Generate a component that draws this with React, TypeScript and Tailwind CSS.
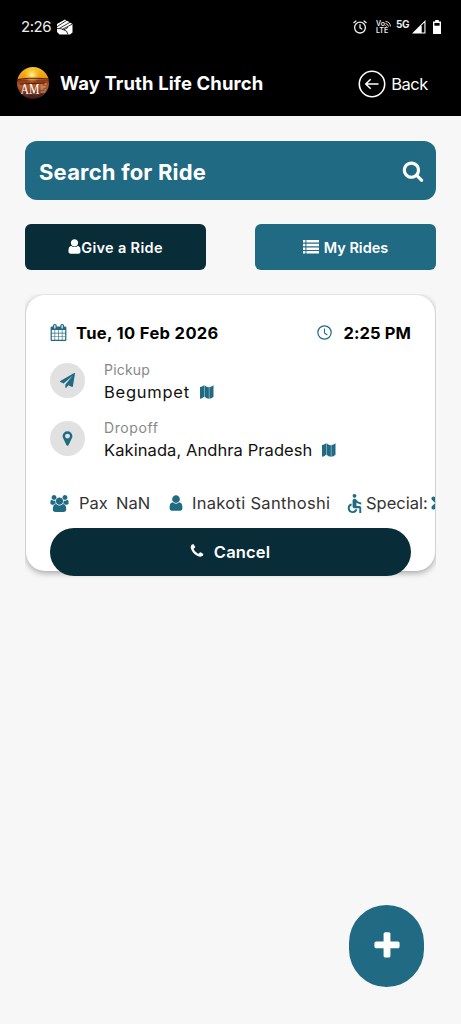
import { MdAccessible } from "react-icons/md";
import type { ReactNode } from "react";

const icons = {
    search: "M1216 832q0-185-131.5-316.5t-316.5-131.5-316.5 131.5-131.5 316.5 131.5 316.5 316.5 131.5 316.5-131.5 131.5-316.5zm512 832q0 52-38 90t-90 38q-54 0-90-38l-343-342q-179 124-399 124-143 0-273.5-55.5t-225-150-150-225-55.5-273.5 55.5-273.5 150-225 225-150 273.5-55.5 273.5 55.5 225 150 150 225 55.5 273.5q0 220-124 399l343 343q37 37 37 90z",
    user: "M1536 1399q0 109-62.5 187t-150.5 78h-854q-88 0-150.5-78t-62.5-187q0-85 8.5-160.5t31.5-152 58.5-131 94-89 134.5-34.5q131 128 313 128t313-128q76 0 134.5 34.5t94 89 58.5 131 31.5 152 8.5 160.5zm-256-887q0 159-112.5 271.5t-271.5 112.5-271.5-112.5-112.5-271.5 112.5-271.5 271.5-112.5 271.5 112.5 112.5 271.5z",
    plus: "M1600 736v192q0 40-28 68t-68 28h-416v416q0 40-28 68t-68 28h-192q-40 0-68-28t-28-68v-416h-416q-40 0-68-28t-28-68v-192q0-40 28-68t68-28h416v-416q0-40 28-68t68-28h192q40 0 68 28t28 68v416h416q40 0 68 28t28 68z",
    calendar:
        "M192 1664h288v-288h-288v288zm352 0h320v-288h-320v288zm-352-352h288v-320h-288v320zm352 0h320v-320h-320v320zm-352-384h288v-288h-288v288zm736 736h320v-288h-320v288zm-384-736h320v-288h-320v288zm768 736h288v-288h-288v288zm-384-352h320v-320h-320v320zm-352-864v-288q0-13-9.5-22.5t-22.5-9.5h-64q-13 0-22.5 9.5t-9.5 22.5v288q0 13 9.5 22.5t22.5 9.5h64q13 0 22.5-9.5t9.5-22.5zm736 864h288v-320h-288v320zm-384-384h320v-288h-320v288zm384 0h288v-288h-288v288zm32-480v-288q0-13-9.5-22.5t-22.5-9.5h-64q-13 0-22.5 9.5t-9.5 22.5v288q0 13 9.5 22.5t22.5 9.5h64q13 0 22.5-9.5t9.5-22.5zm384-64v1280q0 52-38 90t-90 38h-1408q-52 0-90-38t-38-90v-1280q0-52 38-90t90-38h128v-96q0-66 47-113t113-47h64q66 0 113 47t47 113v96h384v-96q0-66 47-113t113-47h64q66 0 113 47t47 113v96h128q52 0 90 38t38 90z",
    group: "M529 896q-162 5-265 128h-134q-82 0-138-40.5t-56-118.5q0-353 124-353 6 0 43.5 21t97.5 42.5 119 21.5q67 0 133-23-5 37-5 66 0 139 81 256zm1071 637q0 120-73 189.5t-194 69.5h-874q-121 0-194-69.5t-73-189.5q0-53 3.5-103.5t14-109 26.5-108.5 43-97.5 62-81 85.5-53.5 111.5-20q10 0 43 21.5t73 48 107 48 135 21.5 135-21.5 107-48 73-48 43-21.5q61 0 111.5 20t85.5 53.5 62 81 43 97.5 26.5 108.5 14 109 3.5 103.5zm-1024-1277q0 106-75 181t-181 75-181-75-75-181 75-181 181-75 181 75 75 181zm704 384q0 159-112.5 271.5t-271.5 112.5-271.5-112.5-112.5-271.5 112.5-271.5 271.5-112.5 271.5 112.5 112.5 271.5zm576 225q0 78-56 118.5t-138 40.5h-134q-103-123-265-128 81-117 81-256 0-29-5-66 66 23 133 23 59 0 119-21.5t97.5-42.5 43.5-21q124 0 124 353zm-128-609q0 106-75 181t-181 75-181-75-75-181 75-181 181-75 181 75 75 181z",
    plane: "M1764 11q33 24 27 64l-256 1536q-5 29-32 45-14 8-31 8-11 0-24-5l-453-185-242 295q-18 23-49 23-13 0-22-4-19-7-30.5-23.5t-11.5-36.5v-349l864-1059-1069 925-395-162q-37-14-40-55-2-40 32-59l1664-960q15-9 32-9 20 0 36 11z",
    marker: "M1152 640q0-106-75-181t-181-75-181 75-75 181 75 181 181 75 181-75 75-181zm256 0q0 109-33 179l-364 774q-16 33-47.5 52t-67.5 19-67.5-19-46.5-52l-365-774q-33-70-33-179 0-212 150-362t362-150 362 150 150 362z",
    phone: "M1600 1240q0 27-10 70.5t-21 68.5q-21 50-122 106-94 51-186 51-27 0-52.5-3.5t-57.5-12.5-47.5-14.5-55.5-20.5-49-18q-98-35-175-83-128-79-264.5-215.5t-215.5-264.5q-48-77-83-175-3-9-18-49t-20.5-55.5-14.5-47.5-12.5-57.5-3.5-52.5q0-92 51-186 56-101 106-122 25-11 68.5-21t70.5-10q14 0 21 3 18 6 53 76 11 19 30 54t35 63.5 31 53.5q3 4 17.5 25t21.5 35.5 7 28.5q0 20-28.5 50t-62 55-62 53-28.5 46q0 9 5 22.5t8.5 20.5 14 24 11.5 19q76 137 174 235t235 174q2 1 19 11.5t24 14 20.5 8.5 22.5 5q18 0 46-28.5t53-62 55-62 50-28.5q14 0 28.5 7t35.5 21.5 25 17.5q25 15 53.5 31t63.5 35 54 30q70 35 76 53 3 7 3 21z",
};

function Icon({ name, className }: { name: keyof typeof icons; className: string }) {
    return (
        <svg viewBox="0 0 1792 1792" fill="currentColor" overflow="visible" className={`shrink-0 ${className}`}>
            <path d={icons[name]} />
        </svg>
    );
}

function MapIcon() {
    return (
        <svg viewBox="0 0 14 14" className="h-[14px] w-[14px] shrink-0 -translate-y-px text-[#206a83]" fill="currentColor">
            <path d="M0 2Q2 2 4.2.3v11.4Q2 13.6 0 13.7zM4.6.3Q6.500 2.300 8.900 2.300v11.400Q6.500 13.500 4.600 11.700zM9.300 2.300Q11.500 2 13.500.3v11.400Q11.500 13.500 9.300 13.700z" />
        </svg>
    );
}

function StatusBar() {
    return (
        <div className="flex h-[52px] items-center justify-between pl-[21px] pr-[20px] pt-[2px] text-[#eee]">
            <div className="flex items-center gap-[6px]">
                <span className="w-[30px] whitespace-nowrap text-[15px] tracking-[-0.45px]">2:26</span>
                <svg viewBox="0 0 16 16" className="-mt-px h-4 w-4">
                    <path d="M0 5 8 .5 15.5 5v8.5L13 15.5H2.5L0 13z" fill="#fff" />
                    <path d="M0 7.7 10.8.7M2.5 9.3 13.5 3M5 10.5 15.5 5M0 9.5q5-.3 7 1.5 3 0 4 4.5M7 10.8l4-2.4" fill="none" stroke="#000" strokeWidth="0.8" />
                </svg>
            </div>
            <div className="flex items-center">
                <svg viewBox="0 0 14 14" className="mr-[9px] h-[14px] w-[14px] -translate-x-[1px]" fill="none" stroke="currentColor" strokeWidth="1.3">
                    <circle cx="7" cy="7.6" r="5.4" />
                    <path d="M7 4.3v3.6l2.3 1.3M.5 3 3.3.7M13.5 3 10.7.7" />
                </svg>
                <div className="w-[15px] -translate-x-[1px] text-[7px] font-semibold leading-[7px]">
                    <div className="flex items-center">
                        Vo
                        <svg viewBox="0 0 6 6" className="h-[6px] w-[6px]" fill="none" stroke="currentColor" strokeWidth="0.9">
                            <path d="M.5.5q4.5 0 5 5M.5 2.5q2.5.2 3 3M.5 4.5l1 1" />
                        </svg>
                    </div>
                    <div>LTE</div>
                </div>
                <span className="ml-[4px] mt-[-7px] w-[13px] text-[10px] font-bold leading-[10px] tracking-[-0.5px]">5G</span>
                <svg viewBox="0 0 14 14" className="ml-[3px] h-[14px] w-[14px]">
                    <path d="M0 13.5 13.5 0v13.5z" fill="#fff" />
                    <path d="M9.7 5.3 12.4 2.500v9.900H9.700z" fill="#000" />
                </svg>
                <svg viewBox="0 0 8 14" className="ml-[7px] h-[14px] w-[8px]">
                    <path d="M2.2 0h3.6v1.5H8V14H0V1.5h2.2z" fill="#fff" />
                    <path d="M1.4 3h5.2v2.7H1.4z" fill="#000" />
                </svg>
            </div>
        </div>
    );
}

function Logo() {
    return (
        <svg viewBox="0 0 32 32" className="-mt-[2px] h-8 w-8">
            <defs>
                <linearGradient id="sky" x1="0" y1="0" x2="0" y2="1">
                    <stop offset="0" stopColor="#f5c51e" />
                    <stop offset="0.34" stopColor="#ef9613" />
                    <stop offset="0.42" stopColor="#8c3613" />
                    <stop offset="0.6" stopColor="#b85a28" />
                    <stop offset="1" stopColor="#35181a" />
                </linearGradient>
                <radialGradient id="sun">
                    <stop offset="0" stopColor="#fff9a8" />
                    <stop offset="1" stopColor="#ffd52c" stopOpacity="0" />
                </radialGradient>
                <clipPath id="round">
                    <circle cx="16" cy="16" r="16" />
                </clipPath>
            </defs>
            <g clipPath="url(#round)">
                <path d="M0 0h32v32H0z" fill="url(#sky)" />
                <circle cx="15" cy="8" r="8" fill="url(#sun)" />
                <path d="M0 13q9-3 32-1M3 17l25-1M5 28l4-2m3 3 5-1m3 1 6-2" stroke="#4c2019" fill="none" />
                <text x="3.5" y="27" textLength="19" lengthAdjust="spacingAndGlyphs" className="fill-white font-['Liberation_Serif'] text-[14px]">AM</text>
                <path d="M23.500 18h2m2-1h2m-6 3h5m-5 2h3m1 1h2m-6 2h5" stroke="#d7c4bb" strokeWidth="0.8" />
            </g>
        </svg>
    );
}

function Header() {
    return (
        <header className="h-[116px] bg-black text-white">
            <StatusBar />
            <div className="flex h-16 items-center pl-[17px] pr-[33px]">
                <Logo />
                <h1 className="ml-[11px] whitespace-nowrap text-[18.5px] font-bold tracking-[0.1px]">Way Truth Life Church</h1>
                <button className="ml-auto flex items-center gap-[5px]">
                    <svg viewBox="0 0 28 28" className="h-7 w-7" fill="none" stroke="currentColor" strokeWidth="1.6">
                        <circle cx="14" cy="14" r="12.7" />
                        <path d="M20.5 14H8M12.7 9.2 7.8 14l4.900 4.800" />
                    </svg>
                    <span className="w-[37px] whitespace-nowrap text-[16.5px] tracking-[-0.5px]">Back</span>
                </button>
            </div>
        </header>
    );
}

function Stop({ icon, label, place }: { icon: ReactNode; label: ReactNode; place: ReactNode }) {
    return (
        <div className="flex h-[58px] items-start">
            <div className="mt-[2px] flex h-[35px] w-[35px] items-center justify-center rounded-full bg-[#e1e1e1] text-[#206a83]">
                {icon}
            </div>
            <div className="ml-[19px] whitespace-nowrap">
                <div className="translate-y-px text-[14px] leading-4 text-[#888]">{label}</div>
                <div className="mt-[3px] flex items-center gap-[10px] text-[16.5px] leading-[25px] text-[#111]">
                    {place}
                    <MapIcon />
                </div>
            </div>
        </div>
    );
}

function RideCard() {
    return (
        <div className="mt-6 h-[300px] w-[411px] overflow-hidden px-px pt-px">
            <div className="h-[276px] rounded-[19px] bg-white pl-[24px] pt-[24px] shadow-[0_2px_6px_rgba(0,0,0,0.35)]">
                <div className="flex h-[28px] items-center pr-[24px] text-[16.5px] font-bold text-black">
                    <Icon name="calendar" className="h-[17px] w-[17px] -translate-y-px text-[#206a83]" />
                    <span className="ml-[9px] whitespace-nowrap tracking-[0.36px]">Tue, 10 Feb 2026</span>
                    <svg viewBox="0 0 16 16" className="ml-auto mr-[11px] h-[15px] w-[15px] -translate-y-px text-[#206a83]" fill="none" stroke="currentColor">
                        <circle cx="8" cy="8" r="7.1" strokeWidth="1.3" />
                        <path d="M8 3.8v4.700l3 2.200" strokeWidth="1.1" />
                    </svg>
                    <span className="whitespace-nowrap tracking-[0.1px]">2:25 PM</span>
                </div>
                <div className="mt-[14px]">
                    <Stop
                        icon={<Icon name="plane" className="h-[15px] w-[15px]" />}
                        label={<span className="tracking-[0.2px]">Pickup</span>}
                        place={<span className="tracking-[0.75px]">Begumpet</span>}
                    />
                    <Stop
                        icon={<Icon name="marker" className="h-[17px] w-[17px]" />}
                        label={<span className="tracking-[0.6px]">Dropoff</span>}
                        place={<span className="tracking-[0.08px]">Kakinada, Andhra Pradesh</span>}
                    />
                </div>
                <div className="mt-[13px] flex h-[26px] items-center overflow-hidden whitespace-nowrap text-[16.5px] text-[#333]">
                    <Icon name="group" className="ml-[1px] h-[17px] w-[17px] text-[#206a83]" />
                    <span className="ml-[11px] w-[37px] shrink-0">Pax</span>
                    <span className="w-[34px] shrink-0">NaN</span>
                    <Icon name="user" className="ml-[17px] h-[18px] w-[18px] text-[#206a83]" />
                    <span className="ml-[7px] w-[138px] shrink-0 tracking-[0.3px]">Inakoti Santhoshi</span>
                    <MdAccessible className="ml-[13px] h-[23px] w-[23px] shrink-0 text-[#206a83]" />
                    <span className="w-[61px] shrink-0">Special:</span>
                    <svg viewBox="0 0 14 14" className="ml-[4px] h-[14px] w-[14px] shrink-0 text-[#206a83]" stroke="currentColor" strokeWidth="4" strokeLinecap="round">
                        <path d="m2.5 2.5 9 9m0-9-9 9" />
                    </svg>
                </div>
                <button className="mt-[12px] flex h-[48px] w-[361px] items-center justify-center rounded-full bg-[#082c38] text-[16.5px] font-semibold text-white">
                    <Icon name="phone" className="mr-[8px] h-[16px] w-[16px] -translate-x-[2px] -translate-y-px" />
                    <span className="-ml-px tracking-[0.15px]">Cancel</span>
                </button>
            </div>
        </div>
    );
}

export default function App() {
    return (
        <div className="flex h-screen w-[461px] flex-col overflow-hidden bg-[#f7f7f7] font-['Inter',sans-serif]">
            <Header />
            <main className="px-[25px] pt-[25px]">
                <div className="flex h-[59px] w-[411px] items-center justify-between rounded-xl bg-[#206a83] pl-[14px] pr-[12px] text-white">
                    <span className="whitespace-nowrap pt-[3px] text-[22px] font-bold tracking-[0.2px]">Search for Ride</span>
                    <Icon name="search" className="h-[22px] w-[22px]" />
                </div>
                <div className="mt-6 flex w-[411px] justify-between text-[14.5px] font-semibold text-white">
                    <button className="flex h-[46px] w-[181px] items-center justify-center rounded-md bg-[#082c38]">
                        <Icon name="user" className="-mx-[2px] h-[17px] w-[17px] -translate-y-px" />
                        <span className="pt-px tracking-[0.33px]">Give a Ride</span>
                    </button>
                    <button className="flex h-[46px] w-[181px] items-center justify-center gap-[5px] rounded-md bg-[#206a83]">
                        <svg viewBox="0 0 16 14" className="-mt-px h-[14px] w-4" fill="currentColor">
                            <path d="M0 0h2.4v2.5H0zM3.4 0H16v2.5H3.4zM0 3.7h2.4v2.5H0zM3.4 3.7H16v2.5H3.4zM0 7.4h2.4v2.5H0zM3.4 7.4H16v2.5H3.4zM0 11.1h2.4v2.5H0zM3.4 11.1H16v2.5H3.4z" />
                        </svg>
                        <span className="pt-px">My Rides</span>
                    </button>
                </div>
                <RideCard />
            </main>
            <button className="mb-[37px] ml-auto mr-[37px] mt-auto flex h-[82px] w-[75px] items-center justify-center rounded-[38px] bg-[#206a83] text-white">
                <Icon name="plus" className="h-[32px] w-[32px]" />
            </button>
        </div>
    );
}
